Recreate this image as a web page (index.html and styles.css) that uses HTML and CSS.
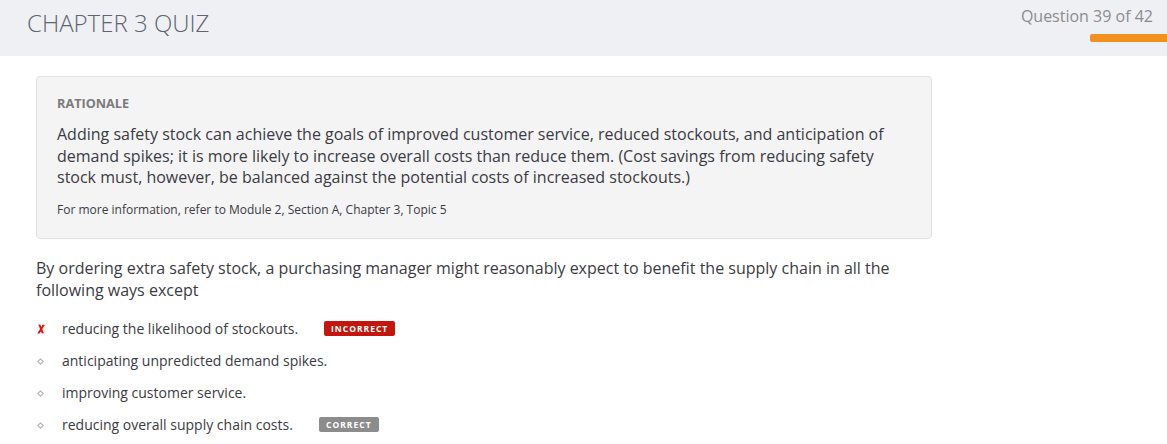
FILE: index.html
```html
<!DOCTYPE html>
<html>
<head>
<meta charset="utf-8">
<link rel="stylesheet" href="styles.css">
</head>
<body>
<header class="topbar">
  <h1 class="title">CHAPTER 3 QUIZ</h1>
  <div class="progress">
    <div class="progress-label">Question 39 of 42</div>
    <div class="progress-track"><div class="progress-fill" style="width:100%"></div></div>
  </div>
</header>
<main class="content">
  <section class="rationale">
    <div class="rationale-head">RATIONALE</div>
    <p class="rationale-text">Adding safety stock can achieve the goals of improved customer service, reduced stockouts, and anticipation of demand spikes; it is more likely to increase overall costs than reduce them. (Cost savings from reducing safety stock must, however, be balanced against the potential costs of increased stockouts.)</p>
    <p class="rationale-ref">For more information, refer to Module 2, Section A, Chapter 3, Topic 5</p>
  </section>
  <p class="question">By ordering extra safety stock, a purchasing manager might reasonably expect to benefit the supply chain in all the following ways except</p>
  <ul class="options">
    <li class="option">
      <span class="mark"><svg width="8" height="10" viewBox="0 0 8 10"><path d="M0.3 9.6 L2.6 9.6 L7.8 0.9 L5.8 0.4 Z" fill="#e0140c"/><path d="M1.3 0.6 L3.3 0.6 L6.9 9.2 L4.9 9.6 Z" fill="#e0140c"/></svg></span>
      <span class="opt-text">reducing the likelihood of stockouts.</span>
      <span class="badge badge-incorrect">INCORRECT</span>
    </li>
    <li class="option">
      <span class="mark"><svg width="7" height="7" viewBox="0 0 7 7"><path d="M3.5 0.8 L6.2 3.5 L3.5 6.2 L0.8 3.5 Z" stroke="#b8b8b8" stroke-width="1.1" fill="none"/></svg></span>
      <span class="opt-text">anticipating unpredicted demand spikes.</span>
    </li>
    <li class="option">
      <span class="mark"><svg width="7" height="7" viewBox="0 0 7 7"><path d="M3.5 0.8 L6.2 3.5 L3.5 6.2 L0.8 3.5 Z" stroke="#b8b8b8" stroke-width="1.1" fill="none"/></svg></span>
      <span class="opt-text">improving customer service.</span>
    </li>
    <li class="option">
      <span class="mark"><svg width="7" height="7" viewBox="0 0 7 7"><path d="M3.5 0.8 L6.2 3.5 L3.5 6.2 L0.8 3.5 Z" stroke="#b8b8b8" stroke-width="1.1" fill="none"/></svg></span>
      <span class="opt-text">reducing overall supply chain costs.</span>
      <span class="badge badge-correct">CORRECT</span>
    </li>
  </ul>
</main>
</body>
</html>
```
FILE: styles.css
```css
* { box-sizing: border-box; }
html, body { margin: 0; padding: 0; background: #fff; }
body {
  font-family: "Open Sans", "Noto Sans", sans-serif;
  color: #3b3b44;
}
.topbar {
  height: 56px;
  background: #eff0f4;
  display: flex;
  justify-content: space-between;
  align-items: flex-start;
}
.title {
  margin: 0;
  padding: 6px 0 0 27px;
  font-size: 24px;
  font-weight: 300;
  line-height: 34px;
  color: #5e6470;
}
.progress {
  display: flex;
  flex-direction: column;
  align-items: flex-end;
  padding-top: 5px;
}
.progress-label {
  font-size: 16px;
  line-height: 22px;
  color: #8c8c8c;
  padding-right: 14px;
}
.progress-track {
  margin-top: 7px;
  width: 77px;
  height: 8px;
  background: #ddd;
  border-radius: 2px 0 0 2px;
  overflow: hidden;
}
.progress-fill {
  height: 100%;
  background: #f29020;
}
.content {
  padding: 20px 36px 0;
}
.rationale {
  width: 896px;
  height: 163px;
  background: #f4f4f4;
  border: 1px solid #e2e2e2;
  border-radius: 4px;
  padding: 18px 20px 0;
}
.rationale-head {
  font-size: 12.7px;
  font-weight: 700;
  line-height: 17px;
  color: #7a7a7a;
}
.rationale-text {
  margin: 12px 0 0;
  font-size: 16px;
  line-height: 21.5px;
}
.rationale-ref {
  margin: 13px 0 0;
  font-size: 12px;
  line-height: 16px;
}
.question {
  margin: 19px 0 0;
  width: 896px;
  font-size: 16px;
  line-height: 21.5px;
}
.options {
  list-style: none;
  margin: 12px 0 0;
  padding: 0;
}
.option {
  display: flex;
  align-items: center;
  height: 32px;
}
.mark {
  width: 26px;
  display: flex;
  align-items: center;
  padding-left: 1px;
}
.opt-text {
  font-size: 14px;
  line-height: 20px;
}
.badge {
  margin-left: 26px;
  height: 15px;
  display: inline-flex;
  align-items: center;
  justify-content: center;
  color: #fff;
  font-size: 8.5px;
  font-weight: 700;
  letter-spacing: 1px;
  border-radius: 2px;
  margin-top: -2px;
}
.badge-incorrect {
  width: 71px;
  background: #c4160c;
}
.badge-correct {
  width: 60px;
  background: #8c8c8c;
}
```
